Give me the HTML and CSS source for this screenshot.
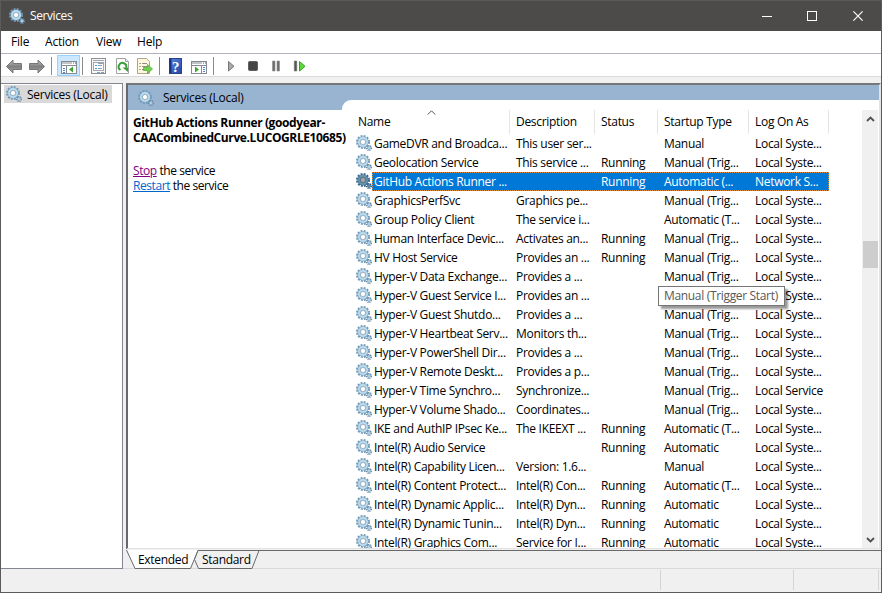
FILE: index.html
```html
<!DOCTYPE html>
<html lang="en">
<head>
  <meta charset="UTF-8">
  <title>Services</title>
  <link rel="stylesheet" href="styles.css">
</head>
<body>
  <svg width="0" height="0" class="defs">
    <symbol id="gear" viewBox="0 0 16 16">
      <circle cx="7" cy="7" r="6" fill="none" stroke="#7199b5" stroke-width="2" stroke-dasharray="1.9 1.24"/>
      <circle cx="7" cy="7" r="4.2" fill="#fff" stroke="#7faac8" stroke-width="2.6"/>
      <circle cx="7" cy="7" r="4.1" fill="none" stroke="#bfdff1" stroke-width="1.6"/>
      <circle cx="7" cy="7" r="2.6" fill="none" stroke="#64839c" stroke-width=".6"/>
      <circle cx="13" cy="13" r="2.3" fill="none" stroke="#668ba8" stroke-width="1.5" stroke-dasharray="1.1 .7"/>
      <circle cx="13" cy="13" r="1.4" fill="#dceaf3" stroke="#83adca" stroke-width="1"/>
    </symbol>
  </svg>

  <div class="window">
    <div class="titlebar">
      <svg class="gear"><use href="#gear"/></svg>
      <span class="title">Services</span>
      <div class="controls">
        <svg width="10" height="10"><path d="M0 5.5h10" stroke="#fff"/></svg>
        <svg width="10" height="10"><rect x=".5" y=".5" width="9" height="9" fill="none" stroke="#fff"/></svg>
        <svg width="10" height="10"><path d="M.4.4l9.2 9.2M9.6.4L.4 9.6" stroke="#fff" stroke-width="1.2"/></svg>
      </div>
    </div>

    <div class="menu">
      <span class="m-file">File</span><span class="m-action">Action</span><span class="m-view">View</span><span>Help</span>
    </div>

    <div class="toolbar">
      <svg width="310" height="22" viewBox="0 54 310 22">
        <defs>
          <linearGradient id="arrow" x2="0" y2="1"><stop stop-color="#c4c4c4"/><stop offset=".5" stop-color="#808080"/><stop offset="1" stop-color="#a5a5a5"/></linearGradient>
          <linearGradient id="help" x2="1" y2="1"><stop stop-color="#5b86e0"/><stop offset="1" stop-color="#2442a2"/></linearGradient>
        </defs>
        <!-- back / forward -->
        <path d="M6.500 66.500l6.500-6.500v3.500h8.500v6h-8.500v3.500z" fill="url(#arrow)" stroke="#777"/>
        <path d="M44.500 66.500l-6.500-6.500v3.500h-8.500v6h8.500v3.500z" fill="url(#arrow)" stroke="#777"/>
        <path d="M51.500 57v18M82.500 57v18M159.500 57v18M213.500 57v18" stroke="#8c8c8c"/>
        <!-- console tree -->
        <rect x="57.500" y="55.500" width="22" height="20" fill="#cce8ff" stroke="#99d1ff"/>
        <g id="pane">
          <rect x="61.500" y="61.500" width="15" height="12" fill="#fff" stroke="#858b90"/>
          <path d="M62 63h10M62 65.500h14" stroke="#858b90" stroke-width="1"/>
          <path d="M73 63h1M75 63h1" stroke="#555"/>
        </g>
        <path d="M66.500 66v7" stroke="#858b90"/>
        <path d="M63 68.500h2M63 70.500h2M63 72.500h2" stroke="#4d86c4"/>
        <path d="M73 66.500v6l-4-3z" fill="#39a52c"/>
        <!-- properties -->
        <rect x="91.500" y="58.500" width="14" height="15" fill="#f7f7f7" stroke="#8b8f94"/>
        <path d="M93 60.500h11" stroke="#a3a8ad"/>
        <rect x="93.500" y="62.500" width="10" height="8" fill="#fff" stroke="#a2a8b0"/>
        <path d="M95 65.500h2M95 68.500h2" stroke="#3f9bd9"/>
        <path d="M98 65.500h4M98 68.500h4M98 63.500h5" stroke="#8fa2b5"/>
        <path d="M97 72.500h3" stroke="#58b3e8"/><path d="M101 72.500h3" stroke="#999"/>
        <!-- refresh -->
        <path d="M116.500 58.500h9l3 3v12h-12z" fill="#fff" stroke="#a2a2a2"/>
        <path d="M125.500 58.500v3h3" fill="#eee" stroke="#a2a2a2"/>
        <path d="M120.500 70a3.800 3.800 0 1 1 5.600-2.200" fill="none" stroke="#36a233" stroke-width="2"/>
        <path d="M122.500 67.500h5.500v4.500z" fill="#36a233"/>
        <!-- export -->
        <path d="M137.500 58.500h9l3 3v12h-12z" fill="#fff8db" stroke="#aaa68f"/>
        <path d="M142 63.500h5M142 66.500h5M142 69.500h5" stroke="#8d8d91"/>
        <path d="M139.500 63.500h1M139.500 66.500h1M139.500 69.500h1" stroke="#555"/>
        <path d="M143.500 67.500h4v-3l5 4.500-5 4.500v-3h-4z" fill="#75cf50" stroke="#4eae37" stroke-width=".8"/>
        <!-- help -->
        <rect x="169.500" y="58.500" width="12" height="15" fill="url(#help)" stroke="#2c438c"/>
        <path d="M170.500 59v14" stroke="#1b3185" stroke-width="2"/>
        <text x="172" y="71.500" class="question">?</text>
        <!-- action pane -->
        <use href="#pane" x="130"/>
        <path d="M201.500 66v7" stroke="#858b90"/>
        <path d="M203 67.500h2M203 69.500h2M203 71.500h2" stroke="#4d86c4"/>
        <path d="M195 66.500v6l4-3z" fill="#39a52c"/>
        <!-- service controls -->
        <path d="M228.500 61.500v9.500l5.500-4.700z" fill="#aaa" stroke="#777"/>
        <rect x="248.500" y="61.500" width="9" height="9" rx="1" fill="#444" stroke="#606060"/>
        <path d="M272.500 61h2.500v10h-2.500zM277 61h2.500v10h-2.500z" fill="#6e6e6e" stroke="#8d8d8d" stroke-width=".6"/>
        <path d="M294.300 61h2.500v10h-2.500z" fill="#555" stroke="#777" stroke-width=".6"/>
        <path d="M299.500 61.500v9.500l5.500-4.700z" fill="#5cd83b" stroke="#2fa51f"/>
      </svg>
    </div>

    <div class="main">
      <div class="tree">
        <div class="node"><svg class="gear"><use href="#gear"/></svg><span>Services (Local)</span></div>
      </div>

      <div class="right">
        <div class="content">
          <div class="banner"><svg class="gear"><use href="#gear"/></svg><span>Services (Local)</span></div>
          <div class="detail">
            <b class="svc1">GitHub Actions Runner (goodyear-</b>
            <b class="svc2">CAACombinedCurve.LUCOGRLE10685)</b>
            <p><a class="visited">Stop</a> the service</p>
            <p><a>Restart</a> the service</p>
          </div>
          <div class="list">
            <div class="table">
              <div class="head">
                <span>Name</span><span>Description</span><span>Status</span><span>Startup Type</span><span>Log On As</span>
                <svg class="sort" width="9" height="5"><path d="M.8 4.500L4.500.8l3.700 3.700" fill="none" stroke="#555"/></svg>
              </div>
              <div id="rows"></div>
              <div class="tooltip">Manual (Trigger Start)</div>
            </div>
            <div class="scrollbar">
              <svg width="9" height="6"><path d="M1 5l3.500-3.500L8 5" fill="none" stroke="#505050" stroke-width="1.800"/></svg>
              <div class="thumb"></div>
              <svg width="9" height="6"><path d="M1 1l3.500 3.500L8 1" fill="none" stroke="#505050" stroke-width="1.800"/></svg>
            </div>
          </div>
        </div>
        <div class="tabs">
          <svg width="755" height="20">
            <path d="M69 0.500H755" stroke="#696969"/>
            <path d="M1 0l8 18.500h55L72 0z" fill="#fff"/>
            <path d="M.5 0L9 18.500h55.500L72 .5" fill="none" stroke="#696969"/>
            <path d="M68.500 9.500l4 9h53.500l7-18H72z" fill="#f0f0f0" stroke="#696969"/>
          </svg>
          <span class="tab-a">Extended</span><span class="tab-b">Standard</span>
        </div>
      </div>
    </div>

    <div class="status"><span></span><span></span><span></span></div>
  </div>

  <script>
    const local = 'Local Syste...';
    const trig = 'Manual (Trig...';
    // name, description, status, startup type, log on as
    const services = [
      ['GameDVR and Broadca...', 'This user ser...', '', 'Manual', local],
      ['Geolocation Service', 'This service ...', 'Running', trig, local],
      ['GitHub Actions Runner ...', '', 'Running', 'Automatic (...', 'Network S...'],
      ['GraphicsPerfSvc', 'Graphics pe...', '', trig, local],
      ['Group Policy Client', 'The service i...', '', 'Automatic (T...', local],
      ['Human Interface Devic...', 'Activates an...', 'Running', trig, local],
      ['HV Host Service', 'Provides an ...', 'Running', trig, local],
      ['Hyper-V Data Exchange...', 'Provides a ...', '', trig, local],
      ['Hyper-V Guest Service I...', 'Provides an ...', '', trig, local],
      ['Hyper-V Guest Shutdo...', 'Provides a ...', '', trig, local],
      ['Hyper-V Heartbeat Serv...', 'Monitors th...', '', trig, local],
      ['Hyper-V PowerShell Dir...', 'Provides a ...', '', trig, local],
      ['Hyper-V Remote Deskt...', 'Provides a p...', '', trig, local],
      ['Hyper-V Time Synchro...', 'Synchronize...', '', trig, 'Local Service'],
      ['Hyper-V Volume Shado...', 'Coordinates...', '', trig, local],
      ['IKE and AuthIP IPsec Ke...', 'The IKEEXT ...', 'Running', 'Automatic (T...', local],
      ['Intel(R) Audio Service', '', 'Running', 'Automatic', local],
      ['Intel(R) Capability Licen...', 'Version: 1.6...', '', 'Manual', local],
      ['Intel(R) Content Protect...', 'Intel(R) Con...', 'Running', 'Automatic (T...', local],
      ['Intel(R) Dynamic Applic...', 'Intel(R) Dyn...', 'Running', 'Automatic', local],
      ['Intel(R) Dynamic Tunin...', 'Intel(R) Dyn...', 'Running', 'Automatic', local],
      ['Intel(R) Graphics Com...', 'Service for I...', 'Running', 'Automatic', local]
    ];
    document.getElementById('rows').innerHTML = services.map((s, i) =>
      `<div class="row${i === 2 ? ' selected' : ''}"><svg class="gear"><use href="#gear"/></svg>` +
      `<div class="cells">${s.map(c => `<span>${c}</span>`).join('')}</div></div>`
    ).join('');
  </script>
</body>
</html>
```
FILE: styles.css
```css
* {
  box-sizing: border-box;
}
body {
  margin: 0;
  font: 12px/15px "Open Sans", "Noto Sans", sans-serif;
  letter-spacing: -0.3px;
  color: #000;
}
.defs {
  position: absolute;
}
span, b {
  white-space: nowrap;
}
.gear {
  width: 16px;
  height: 16px;
  flex: none;
}
.window {
  width: 882px;
  height: 593px;
  border: 1px solid #5b5b5b;
  background: #f0f0f0;
  display: flex;
  flex-direction: column;
  overflow: hidden;
}
.titlebar {
  height: 30px;
  background: #4d4b49;
  color: #fff;
  display: flex;
  align-items: center;
  padding: 0 18px 1px 8px;
}
.title {
  margin-left: 5px;
  letter-spacing: -0.4px;
}
.controls {
  margin-left: auto;
  display: flex;
  gap: 36px;
}
.controls svg:first-child {
  margin-right: -1px;
}
.menu {
  height: 23px;
  background: #fff;
  border-bottom: 1px solid #b2b5bf;
  display: flex;
  padding: 3px 0 0 10px;
  letter-spacing: -0.2px;
}
.m-file { width: 34px; }
.m-action { width: 51px; }
.m-view { width: 41px; }
.toolbar {
  height: 23px;
  background: #fff;
  border-bottom: 1px solid #d9d9d9;
}
.toolbar svg {
  display: block;
  margin-left: -1px;
}
.question {
  font: bold 15px "Liberation Serif", serif;
  fill: #fff;
}
.main {
  height: 492px;
  padding-top: 6px;
  display: flex;
  gap: 3px;
  border-bottom: 1px solid #d9d9d9;
}
.tree {
  width: 122px;
  height: 486px;
  background: #fff;
  border: 1px solid #828790;
  border-left: 0;
  padding: 1px 0 0 3px;
}
.node {
  width: 108px;
  height: 18px;
  background: #d9d9d9;
  display: flex;
  align-items: center;
  gap: 5px;
  padding-left: 2px;
  letter-spacing: -0.25px;
}
.right {
  width: 755px;
}
.content {
  height: 466px;
  background: #fff;
  border: solid;
  border-width: 2px 2px 1px;
  border-color: #696969 #e3e3e3 #e3e3e3 #696969;
  border-top-color: #777;
  display: grid;
  grid-template: 25px 1fr / 221px 1fr;
}
.banner {
  grid-column: 1 / 3;
  grid-row: 1;
  background: #99b4d1;
  display: flex;
  align-items: center;
  gap: 9px;
  padding-left: 10px;
  letter-spacing: -0.25px;
}
/* the long service name runs up to the list's margin */
.detail {
  position: relative;
  z-index: 1;
  padding: 5px 0 0 5px;
}
.detail b {
  display: block;
}
.svc1 { letter-spacing: -0.38px; }
.svc2 { letter-spacing: -0.39px; }
.detail p {
  margin: 0;
  letter-spacing: -0.43px;
}
.detail .svc2 {
  margin-bottom: 18px;
}
a {
  color: #0066cc;
  text-decoration: underline;
}
.visited {
  color: #800080;
}
/* overlaps the lower part of the banner */
.list {
  grid-column: 2;
  grid-row: 2;
  margin: -10px 0 0 -7px;
  height: 448px;
  background: #fff;
  border-top-left-radius: 9px;
  display: flex;
  overflow: hidden;
}
.table {
  position: relative;
  width: 520px;
  padding: 10px 33px 0 14px;
}
.head, .cells {
  display: grid;
  grid-template-columns: 142px 85px 63px 91px 73px;
}
.head {
  position: relative;
  grid-template-columns: 154px 85px 63px 91px 80px;
  height: 24px;
}
.head span {
  line-height: 24px;
  border-right: 1px solid #e5e5e5;
}
.head span:first-child {
  padding-left: 2px;
}
.head span + span {
  padding-left: 6px;
}
.sort {
  position: absolute;
  left: 71px;
  top: 0;
}
.row {
  height: 19px;
  display: flex;
}
.row .gear {
  margin-top: 1px;
}
.cells {
  width: 457px;
  line-height: 19px;
  padding-left: 2px;
}
.selected .cells {
  background: #0078d7;
  color: #fff;
  outline: 1px dotted #e38b35;
  outline-offset: -1px;
}
.selected .gear {
  filter: brightness(.65) saturate(2);
}
.tooltip {
  position: absolute;
  left: 316px;
  top: 186px;
  width: 127px;
  height: 20px;
  border: 1px solid #767676;
  background: #fff;
  color: #575757;
  padding-left: 5px;
  line-height: 18px;
  letter-spacing: -0.33px;
  white-space: nowrap;
  box-shadow: 3px 3px 2px rgba(0, 0, 0, .4);
}
.scrollbar {
  width: 16px;
  height: 438px;
  margin-top: 10px;
  background: #f0f0f0;
  position: relative;
  display: flex;
  flex-direction: column;
  align-items: center;
  padding: 6px 0 5px;
}
.thumb {
  width: 15px;
  height: 27px;
  background: #cdcdcd;
  margin: 119px 0 auto;
}
.tabs {
  position: relative;
  height: 20px;
  margin-top: 1px;
}
.tabs svg {
  display: block;
}
.tab-a, .tab-b {
  position: absolute;
  top: 2px;
  left: 12px;
}
.tab-b {
  left: 76px;
}
.status {
  flex: 1;
  display: grid;
  grid-template-columns: 660px 133px 85px;
  padding: 1px 0 2px;
}
.status span {
  border-right: 1px solid #d4d4d4;
}
```
